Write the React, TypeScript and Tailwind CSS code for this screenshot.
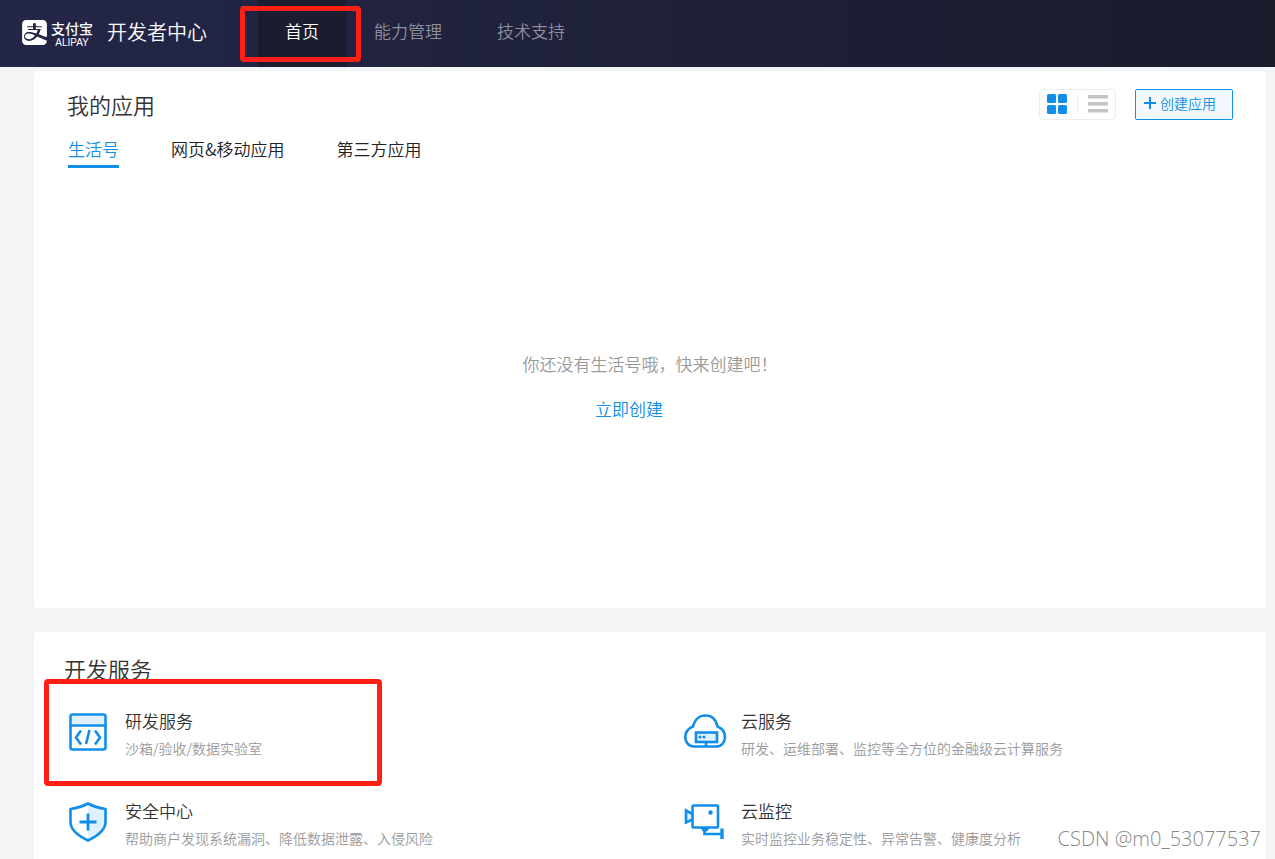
import type { ReactNode } from 'react'
import { SiAlipay } from 'react-icons/si'

type Service = {
  title: string
  desc: string
  icon: ReactNode
  marked?: boolean
}

const NAV = ['首页', '能力管理', '技术支持']
const TABS = ['生活号', '网页&移动应用', '第三方应用']

function CodeIcon() {
  return (
    <svg width="40" height="40" viewBox="0 0 40 40" fill="none" stroke="#108ee9" strokeWidth="2.6">
      <rect x="2.500" y="2.500" width="35" height="35" rx="2" />
      <path d="M4 4h32v9H4z" fill="#dff0ff" stroke="none" />
      <path d="M2.500 13.500h35" />
      <path d="M13 18.500l-5 7 5 7M27 18.500l5 7-5 7M21.500 18l-3.500 14" strokeWidth="2.600" />
    </svg>
  )
}

function ShieldIcon() {
  return (
    <svg width="40" height="40" viewBox="0 0 40 40" fill="none" stroke="#108ee9" strokeWidth="2.6">
      <path d="M20 2.500L37 7v14c0 7-6.500 12.500-17 17.500z" fill="#dff0ff" stroke="none" />
      <path d="M20 1.500C25.500 4.500 30.500 6 37.500 7v13c0 8-7 13.500-17.500 18.500C9.500 33.500 2.500 28 2.500 20V7C9.500 6 14.500 4.500 20 1.500z" strokeLinejoin="round" />
      <path d="M20 11.500v17M11.500 20h17" strokeWidth="2.800" />
    </svg>
  )
}

function CloudIcon() {
  return (
    <svg width="44" height="36" viewBox="0 0 44 36" fill="none" stroke="#108ee9" strokeWidth="2.6">
      <path d="M10 32.500C4.500 32.500 1.300 28 1.300 23c0-5 2.700-8.500 7.700-10.500C10.500 5.500 15.500 1.500 21.500 1.500S32 5.500 33.500 12.500c5 2 7.500 5.500 7.500 10.500 0 5.500-3.500 9.500-9 9.500z" strokeLinejoin="round" />
      <rect x="12" y="18.500" width="21" height="9.500" fill="#dff0ff" />
      <path d="M22 28v4.500" />
      <circle cx="16" cy="23" r="1.500" fill="#108ee9" stroke="none" />
      <circle cx="20" cy="23" r="1.500" fill="#108ee9" stroke="none" />
    </svg>
  )
}

function CameraIcon() {
  return (
    <svg width="42" height="38" viewBox="0 0 42 38" fill="none" stroke="#108ee9" strokeWidth="2.6">
      <path d="M8.500 11L2 7.500v12L8.500 16.500" fill="#dff0ff" />
      <rect x="8.500" y="2.500" width="25.500" height="22" rx="1" />
      <circle cx="26.500" cy="9.500" r="2.200" fill="#108ee9" stroke="none" />
      <path d="M16.500 25h9l-2.500 3.500h-4z" fill="#108ee9" stroke="none" />
      <path d="M20.500 25v6H38" />
      <path d="M38 25.500V36" strokeWidth="3.400" />
    </svg>
  )
}

const SERVICES: Service[] = [
  { title: '研发服务', desc: '沙箱/验收/数据实验室', icon: <CodeIcon />, marked: true },
  { title: '云服务', desc: '研发、运维部署、监控等全方位的金融级云计算服务', icon: <CloudIcon /> },
  { title: '安全中心', desc: '帮助商户发现系统漏洞、降低数据泄露、入侵风险', icon: <ShieldIcon /> },
  { title: '云监控', desc: '实时监控业务稳定性、异常告警、健康度分析', icon: <CameraIcon /> },
]

function Header() {
  return (
    <header className="flex h-[67px] shrink-0 items-stretch bg-linear-to-r from-[#242648] to-[#191c2b] pl-[22px] text-white">
      <a href="#" className="mr-[51px] flex items-center pb-0.5">
        <SiAlipay size={25} />
        <span className="ml-1 flex flex-col items-center gap-0.5 pt-0.5">
          <span className="text-[14px] leading-4 font-medium">支付宝</span>
          <span className="font-['Liberation_Sans',sans-serif] text-[10px] leading-[9px]">ALIPAY</span>
        </span>
        <span className="ml-[14px] pb-0.5 text-[20px] leading-6">开发者中心</span>
      </a>
      <nav className="flex gap-px text-[17px]">
        {NAV.map((item, i) => (
          <a
            key={item}
            href="#"
            className={`relative flex items-center px-[27px] pb-1.5 ${i === 0 ? 'bg-[#1b1d2e] text-white' : 'text-[#8e8f9c]'}`}
          >
            {item}
            {i === 0 && <span className="absolute -left-[18px] -right-[15px] top-[6px] bottom-[5px] rounded border-[5px] border-[#ff1f14]" />}
          </a>
        ))}
      </nav>
    </header>
  )
}

function ViewSwitch() {
  return (
    <div className="flex h-[31px] items-center rounded border border-[#ececec] px-[7px]">
      <button type="button" aria-label="卡片视图" className="pr-[10px]">
        <svg width="20" height="20" viewBox="0 0 20 20" fill="#108ee9">
          <rect x="0" y="0" width="9" height="9" rx="1.500" />
          <rect x="11" y="0" width="9" height="9" rx="1.500" />
          <rect x="0" y="11" width="9" height="9" rx="1.500" />
          <rect x="11" y="11" width="9" height="9" rx="1.500" />
        </svg>
      </button>
      <button type="button" aria-label="列表视图" className="border-l border-[#ececec] pl-[10px]">
        <svg width="20" height="20" viewBox="0 0 20 20" fill="#c4c4c4">
          <path d="M0 1h20v3.500H0zM0 8h20v3.500H0zM0 15h20v3.500H0z" />
        </svg>
      </button>
    </div>
  )
}

function MyApps() {
  return (
    <section className="rounded bg-white pt-[15px] pr-[33px] pb-[186px] pl-[33px]">
      <div className="flex items-center">
        <h2 className="flex-1 text-[22px] leading-9 text-[#333]">我的应用</h2>
        <ViewSwitch />
        <button type="button" className="ml-[19px] flex h-[31px] items-center rounded-xs border border-[#108ee9] bg-[#f3f9ff] pr-4 pb-0.5 pl-2 text-[14px] text-[#108ee9]">
          <svg width="12" height="12" viewBox="0 0 12 12" className="mr-1" stroke="#108ee9" strokeWidth="2">
            <path d="M6 0v12M0 6h12" />
          </svg>
          创建应用
        </button>
      </div>
      <div role="tablist" className="mt-[14px] flex gap-[52px] pl-px text-[17px] leading-[26px]">
        {TABS.map((tab, i) => (
          <button
            key={tab}
            type="button"
            role="tab"
            aria-selected={i === 0}
            className={i === 0 ? 'border-b-[3px] border-[#108ee9] pb-[3px] text-[#108ee9]' : 'border-b-[3px] border-transparent pb-[3px] text-[#222]'}
          >
            {tab}
          </button>
        ))}
      </div>
      <div className="mt-[183px] flex flex-col items-center gap-[19px] text-[17px] leading-[26px]">
        <p className="text-[#999]">你还没有生活号哦，快来创建吧！</p>
        <a href="#" className="mr-[42px] text-[#108ee9]">立即创建</a>
      </div>
    </section>
  )
}

function DevServices() {
  return (
    <section className="flex-1 rounded-t bg-white pt-5">
      <h2 className="pl-[30px] text-[22px] leading-8 text-[#333]">开发服务</h2>
      <div className="mt-[25px] grid grid-cols-2">
        {SERVICES.map(s => (
          <a key={s.title} href="#" className="relative flex h-[90px] items-start pl-[34px]">
            <span className="mt-[3px] flex h-10 w-[57px] shrink-0 items-center">{s.icon}</span>
            <span className="whitespace-nowrap">
              <span className="block text-[17px] leading-6 text-[#333]">{s.title}</span>
              <span className="mt-[3px] block text-[14px] leading-6 text-[#999]">{s.desc}</span>
            </span>
            {s.marked && <span className="absolute -top-[30px] left-[10px] h-[107px] w-[338px] rounded border-[5px] border-[#ff1f14]" />}
          </a>
        ))}
      </div>
    </section>
  )
}

export default function App() {
  return (
    <div className="relative flex h-screen flex-col overflow-hidden bg-gray-100 font-['Noto_Sans_CJK_SC',sans-serif] font-[350]">
      <Header />
      <main className="flex flex-1 flex-col gap-6 pt-1 pr-[9px] pl-[34px]">
        <MyApps />
        <DevServices />
      </main>
      <div className="absolute right-[14px] bottom-1 font-['Open_Sans',sans-serif] text-[20px] leading-8 font-light text-[#888]">
        CSDN @m0_53077537
      </div>
    </div>
  )
}
